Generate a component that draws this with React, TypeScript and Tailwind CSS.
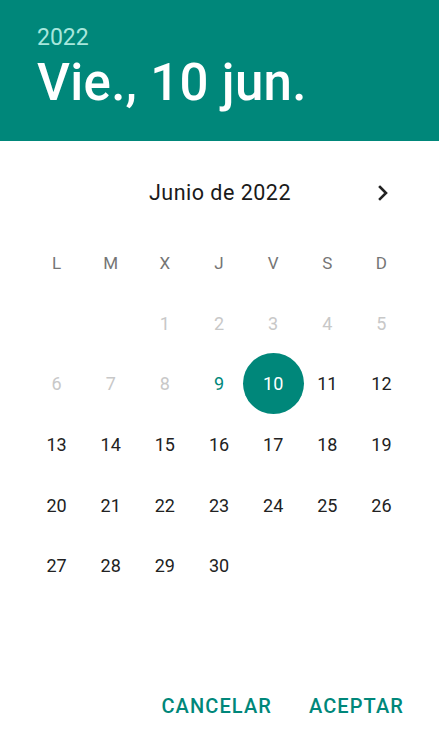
import React from 'react';

const weekdays = ['L', 'M', 'X', 'J', 'V', 'S', 'D'];

type Day = { n: number | null; kind?: 'off' | 'today' | 'sel' | 'on' };

const buildDays = (): Day[] => {
  const days: Day[] = [{ n: null }, { n: null }];
  for (let i = 1; i <= 30; i++) {
    let kind: Day['kind'] = 'on';
    if (i < 9) kind = 'off';
    else if (i === 9) kind = 'today';
    else if (i === 10) kind = 'sel';
    days.push({ n: i, kind });
  }
  return days;
};

const ChevronRight = () => (
  <svg width="24" height="24" viewBox="0 0 24 24" fill="none">
    <path d="M9 6l6 6-6 6" stroke="#222" strokeWidth="2.6" strokeLinecap="square" strokeLinejoin="miter" />
  </svg>
);

export default function App() {
  const days = buildDays();
  return (
    <div className="w-[439px] h-[750px] bg-white overflow-hidden font-['Roboto',sans-serif]">
      <div className="h-[141px] bg-[#00877a] pl-[37px] pt-[23px]">
        <div className="text-[23px] leading-[30px] text-[#a8e6dc]">2022</div>
        <div className="text-[51px] leading-[60px] font-medium text-white tracking-[0.3px]">Vie., 10 jun.</div>
      </div>

      <div className="relative mt-[31px] h-[42px] flex items-center justify-center">
        <span className="text-[21.5px] text-[#1a1a1a] pl-[1px] tracking-[0.5px]">Junio de 2022</span>
        <div className="absolute right-[44px] top-[9px]">
          <ChevronRight />
        </div>
      </div>

      <div className="ml-[29.5px] w-[379px] mt-[20px]">
        <div className="grid grid-cols-7 h-[59px] items-center">
          {weekdays.map((w) => (
            <div key={w} className="text-center text-[17px] text-[#757575]">
              {w}
            </div>
          ))}
        </div>
        <div className="grid grid-cols-7">
          {days.map((d, i) => (
            <div key={i} className="h-[60.6px] flex items-center justify-center">
              {d.n !== null &&
                (d.kind === 'sel' ? (
                  <div className="shrink-0 w-[61px] h-[61px] rounded-full bg-[#00877a] flex items-center justify-center text-white text-[18px]">
                    {d.n}
                  </div>
                ) : (
                  <span
                    className={
                      d.kind === 'off'
                        ? 'text-[18px] text-[#c8c8c8]'
                        : d.kind === 'today'
                        ? 'text-[18px] text-[#00877a]'
                        : 'text-[18px] text-[#222]'
                    }
                  >
                    {d.n}
                  </span>
                ))}
            </div>
          ))}
        </div>
      </div>

      <div className="mt-[90px] h-[40px] flex items-center justify-end gap-[37px] pr-[35px]">
        <button className="text-[20px] font-medium tracking-[1.1px] text-[#00877a]">CANCELAR</button>
        <button className="text-[20px] font-medium tracking-[1.1px] text-[#00877a]">ACEPTAR</button>
      </div>
    </div>
  );
}
